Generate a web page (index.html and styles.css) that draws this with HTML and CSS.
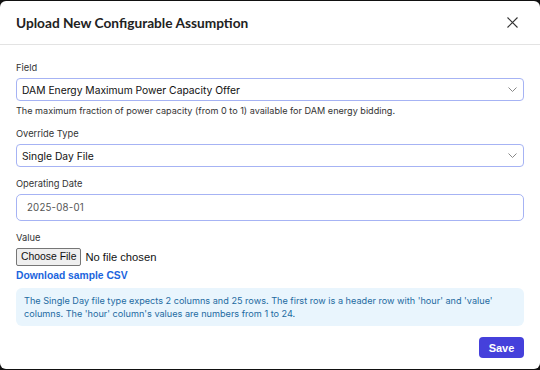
FILE: index.html
```html
<!DOCTYPE html>
<html>
<head>
<meta charset="utf-8">
<link rel="stylesheet" href="styles.css">
</head>
<body>
<div class="modal">
  <div class="header">
    <h1 class="title">Upload New Configurable Assumption</h1>
    <button class="close" aria-label="Close">
      <svg width="11" height="11" viewBox="0 0 11 11"><path d="M0.5 0.5L10.5 10.5M10.5 0.5L0.5 10.5" stroke="#333" stroke-width="1.1" fill="none"/></svg>
    </button>
  </div>
  <div class="body">
    <div class="group">
      <label class="label">Field</label>
      <div class="select">
        <span>DAM Energy Maximum Power Capacity Offer</span>
        <svg class="chev" width="9" height="5" viewBox="0 0 9 5"><path d="M0.5 0.5L4.5 4.5L8.5 0.5" stroke="#888" stroke-width="1" fill="none"/></svg>
      </div>
      <p class="help">The maximum fraction of power capacity (from 0 to 1) available for DAM energy bidding.</p>
    </div>
    <div class="group">
      <label class="label">Override Type</label>
      <div class="select">
        <span>Single Day File</span>
        <svg class="chev" width="9" height="5" viewBox="0 0 9 5"><path d="M0.5 0.5L4.5 4.5L8.5 0.5" stroke="#888" stroke-width="1" fill="none"/></svg>
      </div>
    </div>
    <div class="group">
      <label class="label">Operating Date</label>
      <div class="date">2025-08-01</div>
    </div>
    <div class="group">
      <label class="label">Value</label>
      <div class="file">
        <span class="file-btn">Choose File</span>
        <span class="file-name">No file chosen</span>
      </div>
      <a class="download" href="#">Download sample CSV</a>
      <div class="info">The Single Day file type expects 2 columns and 25 rows. The first row is a header row with 'hour' and 'value' columns. The 'hour' column's values are numbers from 1 to 24.</div>
    </div>
  </div>
  <div class="footer">
    <button class="save">Save</button>
  </div>
</div>
</body>
</html>
```

FILE: styles.css
```css
html, body {
  margin: 0;
  padding: 0;
  background: #111;
  width: 540px;
  height: 370px;
  overflow: hidden;
}
body {
  padding-top: 1px;
  box-sizing: border-box;
  font-family: Inter, "Noto Sans", sans-serif;
}
.modal {
  background: #fff;
  height: 368px;
  border-radius: 6px;
  display: flex;
  flex-direction: column;
}
.header {
  height: 43px;
  border-bottom: 1px solid #e3e3e3;
  display: flex;
  align-items: center;
  justify-content: space-between;
  padding: 0 22px 0 16px;
}
.title {
  margin: 0;
  font-family: Lato, sans-serif;
  font-weight: 700;
  font-size: 13.7px;
  color: #222;
}
.close {
  border: 0;
  background: none;
  padding: 0;
  width: 12px;
  height: 12px;
  display: flex;
  align-items: center;
  justify-content: center;
}
.body {
  padding: 16px 16px 0;
  display: flex;
  flex-direction: column;
  gap: 10px;
}
.group {
  display: flex;
  flex-direction: column;
}
.label {
  font-size: 9.3px;
  line-height: 14px;
  color: #333;
  margin-bottom: 3px;
}
.select {
  height: 23px;
  box-sizing: border-box;
  border: 1px solid #a6b3f4;
  border-radius: 4px;
  display: flex;
  align-items: center;
  justify-content: space-between;
  padding: 0 6px 0 5px;
  font-size: 10.3px;
  color: #111;
}
.chev {
  display: block;
}
.help {
  margin: 3px 0 0;
  font-size: 9.1px;
  line-height: 13px;
  color: #333;
}
.date {
  height: 27px;
  box-sizing: border-box;
  border: 1px solid #a6b3f4;
  border-radius: 5px;
  display: flex;
  align-items: center;
  padding-left: 10px;
  font-size: 9.7px;
  color: #555;
  letter-spacing: 0.2px;
}
.file {
  display: flex;
  align-items: center;
  gap: 4px;
  font-family: "Liberation Sans", Arial, sans-serif;
  font-size: 11.2px;
  color: #111;
}
.file-btn {
  background: #efefef;
  border: 1px solid #767676;
  border-radius: 2px;
  padding: 0 4px;
  height: 16px;
  line-height: 16px;
  font-size: 10.4px;
}
.download {
  margin-top: 2px;
  font-family: "Liberation Sans", Arial, sans-serif;
  font-weight: 700;
  font-size: 10.3px;
  line-height: 16px;
  color: #1a64dd;
  text-decoration: none;
}
.info {
  margin-top: 4px;
  background: #e9f5fd;
  border-radius: 6px;
  padding: 6px 8px;
  font-size: 9.15px;
  line-height: 13px;
  color: #1d6aa1;
}
.footer {
  display: flex;
  justify-content: flex-end;
  padding: 11px 16px 0;
}
.save {
  background: #4540db;
  color: #fff;
  border: 0;
  border-radius: 4px;
  width: 45px;
  height: 21px;
  font-family: "Liberation Sans", Arial, sans-serif;
  font-weight: 700;
  font-size: 11px;
  padding: 0;
}
```
